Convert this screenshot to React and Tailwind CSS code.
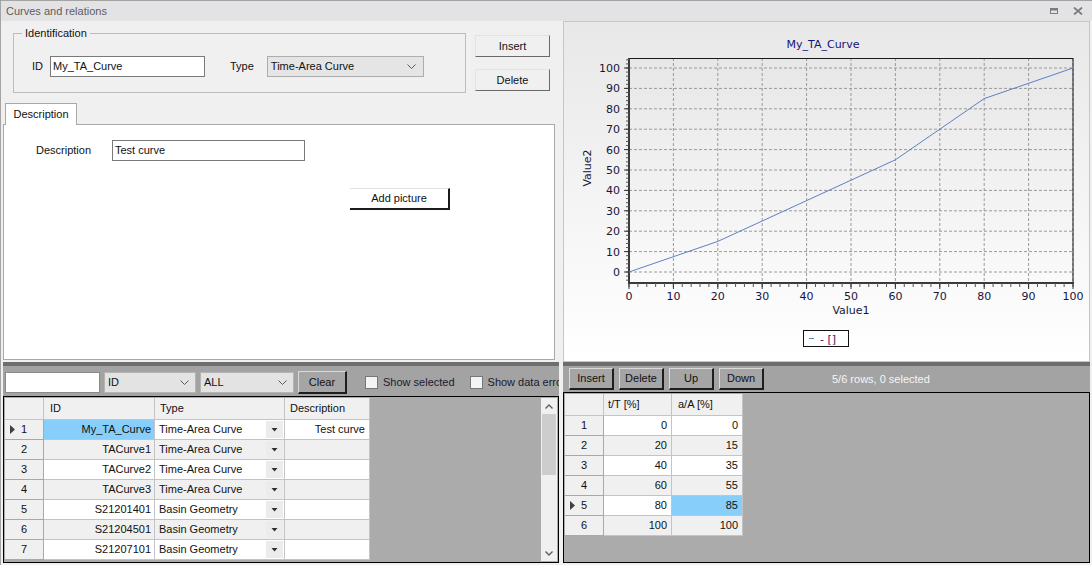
import React from "react";

const Chevron = () => (
  <svg width="9" height="5" viewBox="0 0 9 5">
    <path d="M0.5 0.5 L4.5 4.5 L8.5 0.5" fill="none" stroke="#5a5a5a" strokeWidth="1" />
  </svg>
);

const RowMark = () => (
  <svg width="5" height="9" viewBox="0 0 5 9">
    <path d="M0 0 L5 4.5 L0 9 Z" fill="#404040" />
  </svg>
);

const CellDrop = () => (
  <svg width="7" height="4" viewBox="0 0 7 4">
    <path d="M0.5 0 L6.5 0 L3.5 3.5 Z" fill="#303030" />
  </svg>
);

function Chart() {
  const X = (v) => 65 + 4.44 * v;
  const Y = (v) => 250 - 2.04 * v;
  const majors = [0, 10, 20, 30, 40, 50, 60, 70, 80, 90, 100];
  const xMinor = [];
  for (let v = 0; v <= 100; v += 2) xMinor.push(v);
  const yMinor = [];
  for (let v = -4; v <= 104; v += 2) yMinor.push(v);
  const pts = [
    [0, 0],
    [20, 15],
    [40, 35],
    [60, 55],
    [80, 85],
    [100, 100],
  ];
  const top = 36;
  const bottom = 261;
  const left = 65;
  const right = 509;
  const font = "'DejaVu Sans', Verdana, sans-serif";
  return (
    <svg width="525" height="339" viewBox="0 0 525 339" fontFamily={font}>
      <defs>
        <linearGradient id="plotbg" x1="0" y1="0" x2="0" y2="1">
          <stop offset="0" stopColor="#e7e7e7" />
          <stop offset="1" stopColor="#fafafa" />
        </linearGradient>
      </defs>
      <text x="259" y="26" textAnchor="middle" fontSize="11" fill="#14147a">
        My_TA_Curve
      </text>
      <rect x={left} y={top} width={right - left} height={bottom - top} fill="url(#plotbg)" />
      {majors.map((v) => (
        <line key={"gv" + v} x1={X(v)} y1={top} x2={X(v)} y2={bottom} stroke="#9a9a9a" strokeDasharray="3 2" strokeWidth="1" />
      ))}
      {majors.map((v) => (
        <line key={"gh" + v} x1={left} y1={Y(v)} x2={right} y2={Y(v)} stroke="#9a9a9a" strokeDasharray="3 2" strokeWidth="1" />
      ))}
      <rect x={left} y={top + 0.5} width={right - left} height={bottom - top} fill="none" stroke="#1a1a1a" strokeWidth="1" />
      <line x1={left} y1={top} x2={left} y2={bottom + 1} stroke="#3a3a3a" strokeWidth="2" />
      <line x1={left - 1} y1={bottom} x2={right + 1} y2={bottom} stroke="#3a3a3a" strokeWidth="2" />
      {yMinor.map((v) => (
        <line key={"ym" + v} x1={left - 3} y1={Y(v)} x2={left} y2={Y(v)} stroke="#555" strokeWidth="1" />
      ))}
      {majors.map((v) => (
        <line key={"yM" + v} x1={left - 5} y1={Y(v)} x2={left} y2={Y(v)} stroke="#333" strokeWidth="1" />
      ))}
      {xMinor.map((v) => (
        <line key={"xm" + v} x1={X(v)} y1={bottom} x2={X(v)} y2={bottom + 4} stroke="#555" strokeWidth="1" />
      ))}
      {majors.map((v) => (
        <line key={"xM" + v} x1={X(v)} y1={bottom} x2={X(v)} y2={bottom + 6} stroke="#333" strokeWidth="1" />
      ))}
      {majors.map((v) => (
        <text key={"yl" + v} x="56" y={Y(v) + 4} textAnchor="end" fontSize="11" fill="#16163a">
          {v}
        </text>
      ))}
      {majors.map((v) => (
        <text key={"xl" + v} x={X(v)} y="278" textAnchor="middle" fontSize="11" fill="#16163a">
          {v}
        </text>
      ))}
      <text x="287" y="292" textAnchor="middle" fontSize="11" fill="#16163a">
        Value1
      </text>
      <text x="0" y="0" transform="translate(27 146) rotate(-90)" textAnchor="middle" fontSize="11" fill="#16163a">
        Value2
      </text>
      <polyline
        points={pts.map(([a, b]) => `${X(a)},${Y(b)}`).join(" ")}
        fill="none"
        stroke="#5f7fc2"
        strokeWidth="1"
      />
      <rect x="239.5" y="308.5" width="45" height="16" fill="#ffffff" stroke="#111" strokeWidth="1" />
      <line x1="245" y1="316.5" x2="250" y2="316.5" stroke="#5f7fc2" strokeWidth="1" />
      <text x="256" y="321" fontSize="11" fill="#4a1060">
        - []
      </text>
    </svg>
  );
}

function HCell({ w, children, pl = "pl-[5px]" }) {
  return (
    <div className={`${w} h-full shrink-0 flex items-center ${pl} bg-[#f0f0f0] border-r border-b border-[#c4c4c4]`}>
      {children}
    </div>
  );
}

function RowHead({ n, mark }) {
  return (
    <div className="w-[39px] h-full shrink-0 relative flex items-center justify-center bg-[#f0f0f0] border-r border-b border-[#a8a8a8]">
      {mark && (
        <span className="absolute left-[5px] top-[5px] flex">
          <RowMark />
        </span>
      )}
      <span>{n}</span>
    </div>
  );
}

const leftRows = [
  ["My_TA_Curve", "Time-Area Curve", "Test curve"],
  ["TACurve1", "Time-Area Curve", ""],
  ["TACurve2", "Time-Area Curve", ""],
  ["TACurve3", "Time-Area Curve", ""],
  ["S21201401", "Basin Geometry", ""],
  ["S21204501", "Basin Geometry", ""],
  ["S21207101", "Basin Geometry", ""],
];

const rightRows = [
  [0, 0],
  [20, 15],
  [40, 35],
  [60, 55],
  [80, 85],
  [100, 100],
];

function Btn({ children, className }) {
  return (
    <div
      className={
        "flex items-center justify-center border border-t-[#dadada] border-l-[#dadada] border-r-[#1e1e1e] border-b-[#1e1e1e] border-r-2 border-b-2 text-[11px] text-[#111] " +
        className
      }
    >
      {children}
    </div>
  );
}

export default function App() {
  return (
    <div className="w-[1092px] h-[565px] overflow-hidden bg-[#f0f0f0] border-l border-t border-[#a4a4a4] flex flex-col font-['Liberation_Sans',Arial,sans-serif] text-[11px] text-[#111]">
      {/* title bar */}
      <div className="h-[20px] shrink-0 bg-[#e3e3e6] flex items-center justify-between pl-[5px] pr-[9px]">
        <span className="text-[11px] text-[#5e5e5e]">Curves and relations</span>
        <div className="flex items-center gap-[15px]">
          <svg width="8" height="6" viewBox="0 0 8 6">
            <rect x="0.5" y="0.5" width="7" height="5" fill="none" stroke="#7c7c7c" strokeWidth="1" />
            <line x1="0" y1="1.5" x2="8" y2="1.5" stroke="#7c7c7c" strokeWidth="2" />
          </svg>
          <svg width="10" height="8" viewBox="0 0 10 8">
            <path d="M1 0.5 L9 7.5 M9 0.5 L1 7.5" stroke="#7c7c7c" strokeWidth="1.8" fill="none" />
          </svg>
        </div>
      </div>

      {/* body */}
      <div className="flex-1 flex pl-[2px] pr-[2px] pb-[2px] gap-[4px] min-h-0">
        {/* left column */}
        <div className="w-[556px] shrink-0 flex flex-col">
          <div className="h-[341px] shrink-0 flex flex-col">
            <div className="flex pt-[12px]">
              <div className="relative ml-[10px] w-[453px] h-[60px] border border-[#bcbcbc] flex items-center pt-[6px]">
                <span className="absolute left-[8px] -top-[8px] px-[3px] bg-[#f0f0f0] leading-[14px]">Identification</span>
                <span className="ml-[18px]">ID</span>
                <div className="ml-[7px] w-[155px] h-[21px] bg-white border border-[#7a7a7a] flex items-center pl-[2px]">My_TA_Curve</div>
                <span className="ml-[25px]">Type</span>
                <div className="ml-[13px] w-[157px] h-[21px] bg-[#e5e5e5] border border-[#adadad] flex items-center justify-between pl-[3px] pr-[7px]">
                  <span>Time-Area Curve</span>
                  <Chevron />
                </div>
              </div>
              <div className="ml-[9px] mt-[2px] flex flex-col gap-[12px]">
                <div className="w-[75px] h-[22px] flex items-center justify-center bg-[#f0f0f0] border border-t-[#e3e3e3] border-l-[#e3e3e3] border-r-[#6a6a6a] border-b-[#6a6a6a]">Insert</div>
                <div className="w-[75px] h-[22px] flex items-center justify-center bg-[#f0f0f0] border border-t-[#e3e3e3] border-l-[#e3e3e3] border-r-[#6a6a6a] border-b-[#6a6a6a]">Delete</div>
              </div>
            </div>
            <div className="mt-[10px] ml-[2px] w-[72px] h-[22px] relative z-10 -mb-[1px] bg-white border border-b-0 border-[#a8a8a8] flex items-center justify-center">
              Description
            </div>
            <div className="w-[552px] h-[236px] bg-white border border-[#a8a8a8] flex flex-col">
              <div className="flex items-center mt-[15px] ml-[32px]">
                <span className="w-[76px]">Description</span>
                <div className="w-[193px] h-[21px] border border-[#7a7a7a] flex items-center pl-[2px]">Test curve</div>
              </div>
              <div className="ml-[346px] mt-[27px] w-[100px] h-[22px] bg-white border-t border-[#e0e0e0] border-r-2 border-b-2 border-r-[#1a1a1a] border-b-[#1a1a1a] flex items-center justify-center">
                Add picture
              </div>
            </div>
          </div>
          <div className="h-[4px] shrink-0 bg-[#6e6e6e]" />
          {/* filter toolbar */}
          <div className="h-[30px] shrink-0 bg-[#a3a3a3] flex items-center pt-[3px] overflow-hidden whitespace-nowrap">
            <div className="ml-[2px] w-[95px] h-[21px] shrink-0 bg-white border border-[#8a8a8a]" />
            <div className="ml-[4px] w-[92px] h-[21px] shrink-0 bg-[#e3e3e3] border border-[#b5b5b5] flex items-center justify-between pl-[3px] pr-[6px]">
              <span>ID</span>
              <Chevron />
            </div>
            <div className="ml-[4px] w-[94px] h-[21px] shrink-0 bg-[#e3e3e3] border border-[#b5b5b5] flex items-center justify-between pl-[3px] pr-[6px]">
              <span>ALL</span>
              <Chevron />
            </div>
            <Btn className="ml-[4px] w-[49px] h-[23px] shrink-0 bg-[#a5a5a5]">Clear</Btn>
            <div className="ml-[18px] w-[13px] h-[13px] shrink-0 bg-[#f4f4f4] border border-[#777]" />
            <span className="ml-[5px] text-[#1a1a2e]">Show selected</span>
            <div className="ml-[15px] w-[13px] h-[13px] shrink-0 bg-[#f4f4f4] border border-[#777]" />
            <span className="ml-[5px] text-[#1a1a2e]">Show data errors</span>
          </div>
          {/* left grid */}
          <div className="h-[167px] shrink-0 border border-black bg-[#ababab] flex p-[1px]">
            <div className="flex-1 overflow-hidden">
              <div className="flex h-[22px]">
                <HCell w="w-[39px]" />
                <HCell w="w-[111px]" pl="pl-[6px]">ID</HCell>
                <HCell w="w-[130px]">Type</HCell>
                <HCell w="w-[85px]">Description</HCell>
              </div>
              {leftRows.map((r, i) => {
                const bg = i % 2 === 0 ? "bg-white" : "bg-[#f0f0f0]";
                return (
                  <div key={i} className="flex h-[20px]">
                    <RowHead n={i + 1} mark={i === 0} />
                    <div
                      className={`w-[111px] h-full shrink-0 flex items-center justify-end pr-[3px] border-r border-b border-[#c4c4c4] ${
                        i === 0 ? "bg-[#87cefa]" : bg
                      }`}
                    >
                      {r[0]}
                    </div>
                    <div className={`w-[130px] h-full shrink-0 flex items-center justify-between pl-[4px] pr-[1px] border-r border-b border-[#c4c4c4] ${bg}`}>
                      <span>{r[1]}</span>
                      <span className="w-[17px] h-[17px] bg-[#ececec] flex items-center justify-center">
                        <CellDrop />
                      </span>
                    </div>
                    <div className={`w-[85px] h-full shrink-0 flex items-center justify-end pr-[4px] border-r border-b border-[#c4c4c4] ${bg}`}>
                      {r[2]}
                    </div>
                  </div>
                );
              })}
            </div>
            {/* scrollbar */}
            <div className="w-[16px] shrink-0 bg-[#f0f0f0] flex flex-col items-center">
              <div className="h-[16px] flex items-center justify-center">
                <svg width="8" height="5" viewBox="0 0 8 5">
                  <path d="M0.5 4.5 L4 1 L7.5 4.5" fill="none" stroke="#606060" strokeWidth="1.4" />
                </svg>
              </div>
              <div className="w-[14px] h-[61px] bg-[#cdcdcd]" />
              <div className="flex-1" />
              <div className="h-[16px] flex items-center justify-center">
                <svg width="8" height="5" viewBox="0 0 8 5">
                  <path d="M0.5 0.5 L4 4 L7.5 0.5" fill="none" stroke="#606060" strokeWidth="1.4" />
                </svg>
              </div>
            </div>
          </div>
        </div>

        {/* right column */}
        <div className="flex-1 flex flex-col min-w-0">
          <div className="h-[341px] shrink-0 border border-[#c6c6c6] bg-linear-to-b from-[#e8e8e8] to-white">
            <Chart />
          </div>
          <div className="h-[4px] shrink-0 bg-[#6e6e6e]" />
          <div className="h-[26px] shrink-0 bg-[#a3a3a3] flex items-center pl-[6px] gap-[5px] whitespace-nowrap">
            <Btn className="w-[45px] h-[22px] bg-[#a5a5a5]">Insert</Btn>
            <Btn className="w-[45px] h-[22px] bg-[#a5a5a5]">Delete</Btn>
            <Btn className="w-[45px] h-[22px] bg-[#a5a5a5]">Up</Btn>
            <Btn className="w-[45px] h-[22px] bg-[#a5a5a5]">Down</Btn>
            <span className="ml-[63px] text-[#f6f6f6]">5/6 rows, 0 selected</span>
          </div>
          <div className="flex-1 border border-black bg-[#ababab] p-[1px] overflow-hidden">
            <div className="flex h-[22px]">
              <HCell w="w-[39px]" />
              <HCell w="w-[68px]" pl="pl-[4px]">t/T [%]</HCell>
              <HCell w="w-[71px]" pl="pl-[6px]">a/A [%]</HCell>
            </div>
            {rightRows.map((r, i) => {
              const bg = i % 2 === 0 ? "bg-white" : "bg-[#f0f0f0]";
              return (
                <div key={i} className="flex h-[20px]">
                  <RowHead n={i + 1} mark={i === 4} />
                  <div className={`w-[68px] h-full shrink-0 flex items-center justify-end pr-[4px] border-r border-b border-[#c4c4c4] ${bg}`}>
                    {r[0]}
                  </div>
                  <div
                    className={`w-[71px] h-full shrink-0 flex items-center justify-end pr-[4px] border-r border-b border-[#c4c4c4] ${
                      i === 4 ? "bg-[#87cefa]" : bg
                    }`}
                  >
                    {r[1]}
                  </div>
                </div>
              );
            })}
          </div>
        </div>
      </div>
    </div>
  );
}
